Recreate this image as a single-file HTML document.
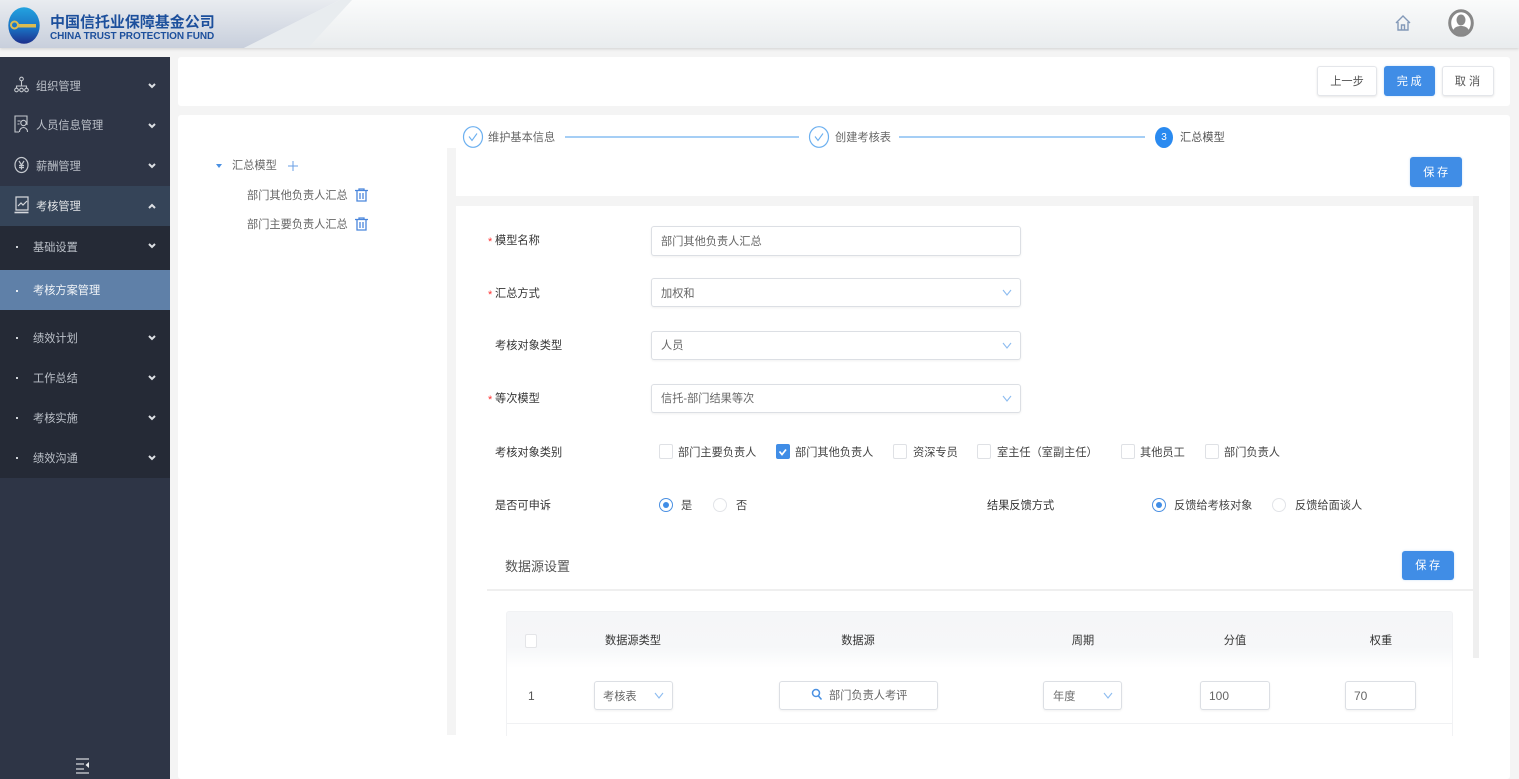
<!DOCTYPE html>
<html lang="zh"><head><meta charset="utf-8"><title>考核方案管理</title>
<style>
html,body{margin:0;padding:0;width:1519px;height:779px;overflow:hidden;background:#f4f4f4}
body{position:relative;font-family:"Liberation Sans","Noto Sans CJK SC",sans-serif;font-size:11.2px;color:#444;filter:blur(.35px)}
.a,.t,.box,.btn,.cb,.rd,svg.i{position:absolute}
.t{white-space:nowrap;line-height:16px;margin-top:1px}
.c{transform:translateX(-50%)}
.s{color:#bcc1c9}
.box{background:#fff;border:1px solid #dcdfe4;border-radius:3px;box-sizing:border-box;box-shadow:0 1px 2px rgba(0,0,0,.06)}
.btn{box-sizing:border-box;border-radius:3px;text-align:center;font-size:11.2px}
.w{background:#fff;border:1px solid #e4e6ea;color:#555;box-shadow:0 1px 2px rgba(0,0,0,.1)}
.b{background:#408de6;color:#fff;letter-spacing:2.500px;padding-left:2px;box-shadow:0 0 2px rgba(64,141,230,.3)}
.cb{width:14px;height:15px;box-sizing:border-box;border:1px solid #dfe1e5;border-radius:2px;background:#fff;top:444px}
.rd{width:14px;height:14px;box-sizing:border-box;border:1px solid #e2e4e8;border-radius:50%;background:#fff;top:498px}
.rd.on{border-color:#4a90e2}
.rd.on:after{content:"";position:absolute;left:3px;top:3px;width:6px;height:6px;border-radius:50%;background:#408de6}
.r{color:#f33;font-size:11px}
.l{color:#333}
</style></head><body>

<!-- header -->
<div class="a" style="left:0;top:0;width:1519px;height:48px;background:linear-gradient(#fafbfb,#e9ecee);box-shadow:0 1px 3px rgba(0,0,0,.15)"></div>
<svg class="i" style="left:0;top:0" width="360" height="48"><defs><linearGradient id="g" x1="0" y1="0" x2="0" y2="1"><stop offset="0" stop-color="#e9ecf0"/><stop offset="1" stop-color="#c8cfdc"/></linearGradient></defs><polygon points="0,0 340,0 244,48 0,48" fill="url(#g)"/><polygon points="340,0 352,0 308,48 244,48" fill="#e8ecef"/></svg>
<svg class="i" style="left:8px;top:7px" width="32" height="37"><defs><linearGradient id="lg" x1="0" y1="0" x2="0" y2="1"><stop offset="0" stop-color="#23a3e0"/><stop offset=".6" stop-color="#1a6ec0"/><stop offset="1" stop-color="#1d2f8c"/></linearGradient></defs><ellipse cx="16" cy="18.500" rx="15.700" ry="18.300" fill="url(#lg)"/><circle cx="6.500" cy="18" r="3.500" fill="none" stroke="#dcbc50" stroke-width="2"/><rect x="10" y="17" width="18" height="3.500" fill="#dcbc50"/></svg>
<div class="t" style="left:50px;top:12px;font-size:15px;line-height:20px;color:#1c4f9c;font-weight:700;letter-spacing:-.03px">中国信托业保障基金公司</div>
<div class="t" style="left:50px;top:29px;font-size:10px;line-height:14px;color:#1c4f9c;font-weight:700;letter-spacing:-.08px">CHINA TRUST PROTECTION FUND</div>
<svg class="i" style="left:1395px;top:14px" width="16" height="18" fill="none" stroke="#8399b8" stroke-width="1.400"><path d="M1 9 8 2l7 7M3 8v8h10V8M6.500 16v-5h3v5"/></svg>
<svg class="i" style="left:1448px;top:9px" width="26" height="28"><ellipse cx="13" cy="14" rx="11.300" ry="12.300" fill="#fff" stroke="#888" stroke-width="3"/><ellipse cx="13" cy="11" rx="4.500" ry="5.500" fill="#8a8a8a"/><path d="M5 22c1-4 5-5 8-5s7 1 8 5c-2 2.500-5 3.500-8 3.500s-6-1-8-3.500z" fill="#8a8a8a"/></svg>

<!-- sidebar -->
<div class="a" style="left:0;top:57px;width:170px;height:722px;background:#2e3546"></div>
<div class="a" style="left:0;top:186px;width:170px;height:40px;background:#354458"></div>
<div class="a" style="left:0;top:226px;width:170px;height:252px;background:#252a36"></div>
<div class="a" style="left:0;top:270px;width:170px;height:40px;background:#5f80a8"></div>

<svg class="i" style="left:14px;top:76px" width="15" height="17" fill="none" stroke="#c4c8ce" stroke-width="1.100"><circle cx="7.500" cy="3" r="1.800"/><path d="M7.500 5v5M2.500 12v-2h10v2"/><circle cx="2.500" cy="14" r="1.800"/><circle cx="7.500" cy="14" r="1.800"/><circle cx="12.500" cy="14" r="1.800"/></svg>
<svg class="i" style="left:14px;top:115px" width="15" height="18" fill="none" stroke="#c4c8ce" stroke-width="1.100"><path d="M5 17H1V1h12v9"/><path d="M3.500 6h3M3.500 9h2"/><circle cx="9.500" cy="8" r="2.700"/><path d="M5.500 17c0-3 2-4.500 4-4.500s4 1.500 4 4.500"/></svg>
<svg class="i" style="left:14px;top:156px" width="15" height="18" fill="none" stroke="#c4c8ce" stroke-width="1.200"><ellipse cx="7.500" cy="9" rx="6.500" ry="7.500"/><path d="M5 5l2.500 4L10 5M7.500 9v4.500M5 9.500h5M5 11.500h5"/></svg>
<svg class="i" style="left:14px;top:195px" width="15" height="19" fill="none" stroke="#d5d8dc" stroke-width="1.200"><path d="M2 15V2h12v13z"/><path d="M4 11l3-3 2 2 4-4" /><path d="M0.500 17.500h14" stroke-width="1.600"/></svg>

<div class="t s" style="left:36px;top:78px">组织管理</div>
<div class="t s" style="left:36px;top:117px">人员信息管理</div>
<div class="t s" style="left:36px;top:158px">薪酬管理</div>
<div class="t" style="left:36px;top:198px;color:#e4e7ea">考核管理</div>
<div class="t s" style="left:33px;top:239px">基础设置</div>
<div class="t" style="left:33px;top:282px;color:#f4f6f9">考核方案管理</div>
<div class="t s" style="left:33px;top:330px">绩效计划</div>
<div class="t s" style="left:33px;top:370px">工作总结</div>
<div class="t s" style="left:33px;top:410px">考核实施</div>
<div class="t s" style="left:33px;top:450px">绩效沟通</div>

<svg class="i" style="left:0;top:0" width="170" height="779" fill="none" stroke="#dde0e4" stroke-width="2">
<path d="M149 84l3 3 3-3M149 124l3 3 3-3M149 164l3 3 3-3M149 244l3 3 3-3M149 336l3 3 3-3M149 376l3 3 3-3M149 416l3 3 3-3M149 456l3 3 3-3"/>
<path d="M149 208l3-3 3 3"/>
<g fill="#cfd3d8" stroke="none"><rect x="16" y="246" width="2" height="2"/><rect x="16" y="290" width="2" height="2" fill="#e8edf3"/><rect x="16" y="337" width="2" height="2"/><rect x="16" y="377" width="2" height="2"/><rect x="16" y="417" width="2" height="2"/><rect x="16" y="457" width="2" height="2"/></g>
<path d="M76 759h13M76 764h8M76 769h8M76 773h13" stroke="#b8bcc2" stroke-width="1.500"/><path d="M89 762v6l-3.500-3z" fill="#e8eaed" stroke="none"/>
</svg>

<!-- top toolbar -->
<div class="a" style="left:178px;top:57px;width:1332px;height:49px;background:#fff;border-radius:3px"></div>
<div class="btn w" style="left:1317px;top:66px;width:60px;height:30px;line-height:30px">上一步</div>
<div class="btn b" style="left:1384px;top:66px;width:51px;height:30px;line-height:32px">完成</div>
<div class="btn w" style="left:1442px;top:66px;width:52px;height:30px;line-height:30px;letter-spacing:3px;padding-left:2px">取消</div>

<!-- main -->
<div class="a" style="left:178px;top:115px;width:1332px;height:664px;background:#fff;border-radius:3px"></div>
<div class="a" style="left:447px;top:148px;width:9px;height:587px;background:#f4f4f4"></div>
<div class="a" style="left:456px;top:148px;width:1022px;height:48px;background:#fff;border-radius:0 0 3px 3px"></div>
<div class="a" style="left:456px;top:196px;width:1023px;height:10px;background:#f4f4f4"></div>
<div class="a" style="left:1473px;top:196px;width:6px;height:462px;background:#efefef"></div>

<!-- tree -->
<svg class="i" style="left:214px;top:162px" width="10" height="8"><path d="M2 2h6L5 6z" fill="#4a90e2"/></svg>
<div class="t" style="left:232px;top:157px;color:#666">汇总模型</div>
<svg class="i" style="left:288px;top:161px" width="10" height="10" stroke="#6a9fe6" stroke-width="1"><path d="M5 0v10M0 5h10"/></svg>
<div class="t" style="left:247px;top:187px;color:#666">部门其他负责人汇总</div>
<div class="t" style="left:247px;top:216px;color:#666">部门主要负责人汇总</div>
<svg class="i" style="left:355px;top:188px" width="13" height="14" fill="none" stroke="#4a86dc" stroke-width="1.300"><path d="M0 2.500h13M4 2.500V1h5v1.500M2 2.500V13h9V2.500M5 5v6M8 5v6"/></svg>
<svg class="i" style="left:355px;top:217px" width="13" height="14" fill="none" stroke="#4a86dc" stroke-width="1.300"><path d="M0 2.500h13M4 2.500V1h5v1.500M2 2.500V13h9V2.500M5 5v6M8 5v6"/></svg>

<!-- steps -->
<svg class="i" style="left:462px;top:125px" width="22" height="24" fill="none"><ellipse cx="11" cy="12" rx="9.500" ry="10.300" stroke="#6cb0f0" stroke-width="1.200"/><path d="M7 11.500l3 4 5-7" stroke="#6cb0f0" stroke-width="1.100"/></svg>
<svg class="i" style="left:808px;top:125px" width="22" height="24" fill="none"><ellipse cx="11" cy="12" rx="9.500" ry="10.300" stroke="#6cb0f0" stroke-width="1.200"/><path d="M7 11.500l3 4 5-7" stroke="#6cb0f0" stroke-width="1.100"/></svg>
<div class="a" style="left:1155px;top:127px;width:18px;height:21px;border-radius:50%;background:#2a8af0;color:#fff;text-align:center;line-height:22px;font-size:10px">3</div>
<div class="t" style="left:488px;top:129px;color:#666">维护基本信息</div>
<div class="t" style="left:835px;top:129px;color:#666">创建考核表</div>
<div class="t" style="left:1180px;top:129px;color:#555">汇总模型</div>
<div class="a" style="left:565px;top:136px;width:234px;height:2px;background:#a5cef5"></div>
<div class="a" style="left:899px;top:136px;width:246px;height:2px;background:#a5cef5"></div>

<div class="btn b" style="left:1410px;top:157px;width:52px;height:30px;line-height:32px">保存</div>

<!-- form -->
<div class="t r" style="left:488px;top:233px">*</div><div class="t l" style="left:495px;top:232px">模型名称</div>
<div class="t r" style="left:488px;top:286px">*</div><div class="t l" style="left:495px;top:285px">汇总方式</div>
<div class="t l" style="left:495px;top:337px">考核对象类型</div>
<div class="t r" style="left:488px;top:391px">*</div><div class="t l" style="left:495px;top:390px">等次模型</div>

<div class="box" style="left:651px;top:226px;width:370px;height:30px"></div>
<div class="box" style="left:651px;top:278px;width:370px;height:29px"></div>
<div class="box" style="left:651px;top:331px;width:370px;height:29px"></div>
<div class="box" style="left:651px;top:384px;width:370px;height:29px"></div>
<div class="t" style="left:661px;top:233px;color:#666">部门其他负责人汇总</div>
<div class="t" style="left:661px;top:285px;color:#666">加权和</div>
<div class="t" style="left:661px;top:337px;color:#666">人员</div>
<div class="t" style="left:661px;top:390px;color:#666">信托-部门结果等次</div>
<svg class="i" style="left:0;top:0;pointer-events:none" width="1519" height="779" fill="none" stroke="#8dbcf0" stroke-width="1.100"><path d="M1003 290l4 5 4-5M1003 343l4 5 4-5M1003 396l4 5 4-5"/></svg>

<div class="t l" style="left:495px;top:444px">考核对象类别</div>
<div class="cb" style="left:659px"></div><div class="t" style="left:678px;top:444px">部门主要负责人</div>
<div class="cb" style="left:776px;background:#408de6;border-color:#408de6"><svg width="12" height="13" style="display:block" fill="none" stroke="#fff" stroke-width="1.700"><path d="M2.500 6.500l2.500 3 4-5"/></svg></div><div class="t" style="left:795px;top:444px">部门其他负责人</div>
<div class="cb" style="left:893px"></div><div class="t" style="left:913px;top:444px">资深专员</div>
<div class="cb" style="left:977px"></div><div class="t" style="left:997px;top:444px">室主任（室副主任）</div>
<div class="cb" style="left:1121px"></div><div class="t" style="left:1140px;top:444px">其他员工</div>
<div class="cb" style="left:1205px"></div><div class="t" style="left:1224px;top:444px">部门负责人</div>

<div class="t l" style="left:495px;top:497px">是否可申诉</div>
<div class="rd on" style="left:659px"></div><div class="t" style="left:681px;top:497px">是</div>
<div class="rd" style="left:713px"></div><div class="t" style="left:736px;top:497px">否</div>
<div class="t l" style="left:987px;top:497px">结果反馈方式</div>
<div class="rd on" style="left:1152px"></div><div class="t" style="left:1174px;top:497px">反馈给考核对象</div>
<div class="rd" style="left:1272px"></div><div class="t" style="left:1295px;top:497px">反馈给面谈人</div>

<div class="t" style="left:505px;top:558px;font-size:13px;color:#555">数据源设置</div>
<div class="btn b" style="left:1402px;top:551px;width:52px;height:29px;line-height:31px">保存</div>
<div class="a" style="left:487px;top:589px;width:986px;height:2px;background:#efefef"></div>

<!-- table -->
<div class="a" style="left:506px;top:611px;width:947px;height:125px;box-sizing:border-box;border:1px solid #f1f2f4;border-bottom:0;border-radius:3px 3px 0 0;background:linear-gradient(#f5f6f8 0,#f6f7f9 35px,#fff 56px)"></div>
<div class="a" style="left:507px;top:723px;width:945px;height:1px;background:#f0f1f3"></div>
<div class="a" style="left:525px;top:634px;width:12px;height:14px;background:#fff;border:1px solid #e4e5e8;box-sizing:border-box;border-radius:2px"></div>
<div class="t c l" style="left:633px;top:632px">数据源类型</div>
<div class="t c l" style="left:858px;top:632px">数据源</div>
<div class="t c l" style="left:1083px;top:632px">周期</div>
<div class="t c l" style="left:1235px;top:632px">分值</div>
<div class="t c l" style="left:1381px;top:632px">权重</div>

<div class="t" style="left:528px;top:687px;font-size:12px;color:#555">1</div>
<div class="box" style="left:594px;top:681px;width:79px;height:29px"></div>
<div class="t" style="left:603px;top:688px;color:#666">考核表</div>
<div class="box" style="left:779px;top:681px;width:159px;height:29px"></div>
<svg class="i" style="left:811px;top:688px" width="12" height="13" fill="none" stroke="#4a90e2" stroke-width="1.500"><circle cx="5" cy="5" r="3.500"/><path d="M7.500 8l3 3.500"/></svg>
<div class="t" style="left:829px;top:687px;color:#666">部门负责人考评</div>
<div class="box" style="left:1043px;top:681px;width:79px;height:29px"></div>
<div class="t" style="left:1053px;top:688px;color:#666">年度</div>
<div class="box" style="left:1200px;top:681px;width:70px;height:29px"></div>
<div class="t" style="left:1209px;top:687px;color:#666;font-size:12px">100</div>
<div class="box" style="left:1345px;top:681px;width:71px;height:29px"></div>
<div class="t" style="left:1354px;top:687px;color:#666;font-size:12px">70</div>
<svg class="i" style="left:0;top:0;pointer-events:none" width="1519" height="779" fill="none" stroke="#8dbcf0" stroke-width="1.100"><path d="M655 693l4 5 4-5M1104 693l4 5 4-5"/></svg>
</body></html>
